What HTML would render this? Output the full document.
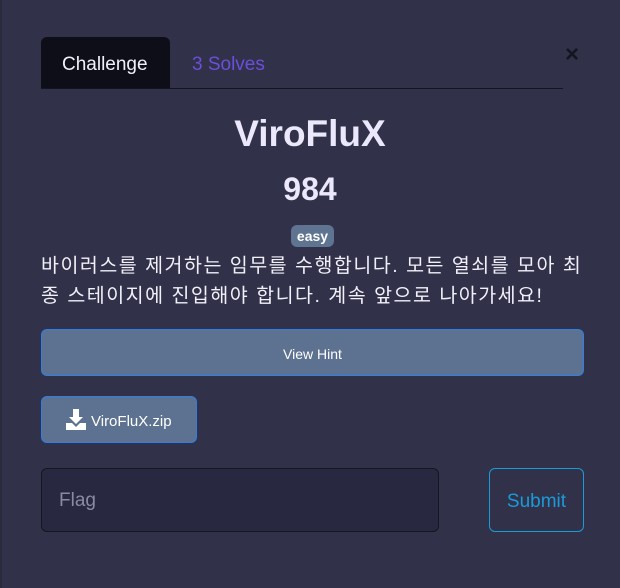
<!DOCTYPE html>
<html><head><meta charset="utf-8"><style>
body{margin:0;width:620px;height:588px;background:#32314a;font-family:"Liberation Sans","Noto Sans CJK KR",sans-serif;position:relative;overflow:hidden}
.a{position:absolute}
</style></head><body>
<div class="a" style="left:0;top:0;width:2px;height:588px;background:#2a2a3a"></div>
<div class="a" style="left:41px;top:37px;width:129px;height:52px;background:#0e0e18;border-radius:6px 6px 0 0"></div>
<div class="a" style="left:41px;top:88px;width:522px;height:1px;background:#15151f"></div>
<div class="a" style="left:62px;top:54px;font-size:19px;color:#f0f0f8">Challenge</div>
<div class="a" style="left:192px;top:54px;font-size:19px;color:#6a4fd8">3 Solves</div>
<div class="a" style="left:565px;top:41px;font-size:24px;color:#15151f;font-weight:bold">×</div>
<div class="a" style="left:0;width:620px;top:113px;text-align:center;font-size:37px;font-weight:bold;color:#ebe8fb">ViroFluX</div>
<div class="a" style="left:0;width:620px;top:171px;text-align:center;font-size:32px;font-weight:bold;color:#ebe8fb">984</div>
<div class="a" style="left:291px;top:225px;width:43px;height:22px;background:#5e7490;border-radius:6px;color:#fff;font-size:14px;font-weight:bold;text-align:center;line-height:22px">easy</div>
<div class="a" style="left:41px;top:251px;width:580px;font-size:19.5px;letter-spacing:1.5px;line-height:30px;color:#f0f0f8;white-space:nowrap">바이러스를 제거하는 임무를 수행합니다. 모든 열쇠를 모아 최<br>종 스테이지에 진입해야 합니다. 계속 앞으로 나아가세요!</div>
<div class="a" style="left:41px;top:329px;width:541px;height:45px;background:#5d7290;border:1px solid #2f7fe6;border-radius:6px;color:#fff;font-size:14px;text-align:center;line-height:48px">View Hint</div>
<div class="a" style="left:41px;top:396px;width:154px;height:45px;background:#5d7290;border:1px solid #2f7fe6;border-radius:6px;color:#fff;font-size:15px;line-height:49px">
<svg style="position:absolute;left:24px;top:12px" width="20" height="22" viewBox="0 0 20 22"><path d="M7 0h6v8h4l-7 7-7-7h4z" fill="#fff"/><path d="M0 14h6l4 4 4-4h6v7H0z" fill="#fff"/></svg>
<span style="position:absolute;left:49px">ViroFluX.zip</span></div>
<div class="a" style="left:41px;top:468px;width:396px;height:62px;background:#282840;border:1px solid #15151f;border-radius:6px;color:#8a8aa0;font-size:19px;line-height:64px;text-indent:17px">Flag</div>
<div class="a" style="left:489px;top:468px;width:93px;height:62px;border:1px solid #1a9ad8;border-radius:6px;color:#1a9ad8;font-size:19px;line-height:66px;text-align:center">Submit</div>
</body></html>
